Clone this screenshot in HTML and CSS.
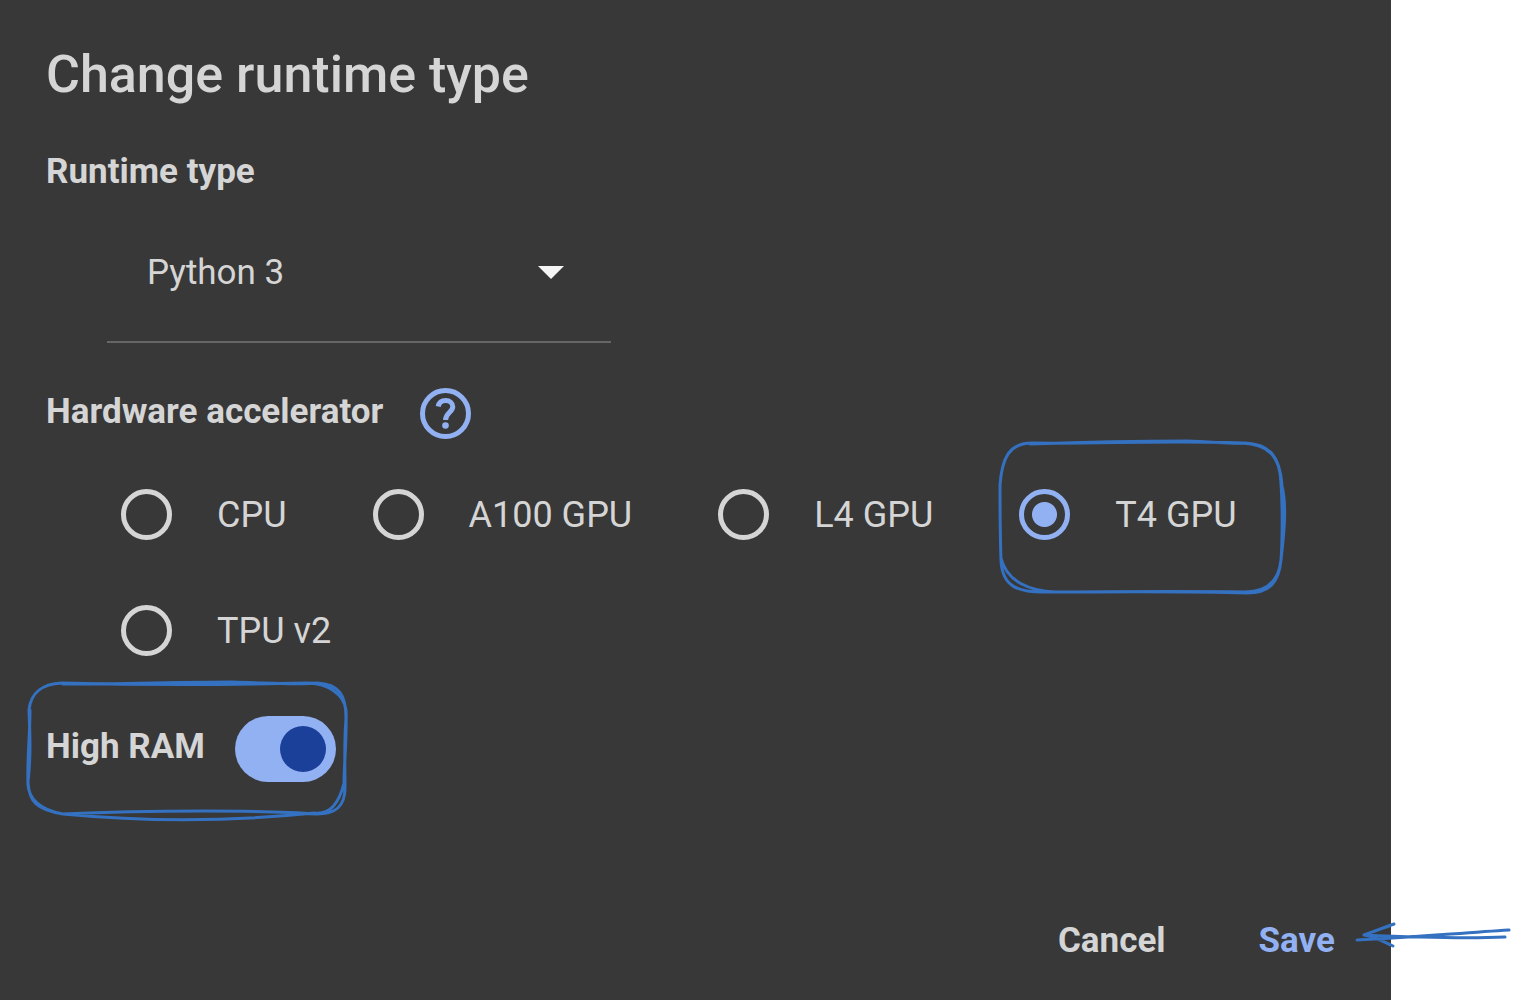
FILE: index.html
```html
<!DOCTYPE html>
<html lang="en">
<head>
<meta charset="utf-8">
<title>Change runtime type</title>
<link rel="stylesheet" href="styles.css">
</head>
<body>
<main class="dialog">
  <h1 class="title">Change runtime type</h1>

  <label class="heading" for="runtime">Runtime type</label>
  <div class="select-field">
    <select class="select" id="runtime">
      <option selected>Python 3</option>
    </select>
    <svg class="select-arrow" viewBox="0 0 26 13" aria-hidden="true"><path d="M0 0H26L13 13Z"/></svg>
  </div>

  <div class="heading-row">
    <h2 class="heading" id="accelerator">Hardware accelerator</h2>
    <button class="help" type="button" aria-label="Help">
      <svg class="help-icon" viewBox="0 0 51 51">
        <circle class="line" cx="25.5" cy="25.5" r="23"/>
        <path class="mark" d="M18.2 18.5C19 14.5 21.8 12.5 25.6 12.5C29.8 12.5 32.8 15.2 32.8 18.8C32.8 24 25.6 25 25.6 32"/>
        <circle class="dot" cx="25.5" cy="37.5" r="3.3"/>
      </svg>
    </button>
  </div>

  <div class="options" role="radiogroup" aria-labelledby="accelerator">
    <label class="option"><input class="radio" type="radio" name="accelerator">CPU</label>
    <label class="option"><input class="radio" type="radio" name="accelerator">A100 GPU</label>
    <label class="option"><input class="radio" type="radio" name="accelerator">L4 GPU</label>
    <label class="option"><input class="radio" type="radio" name="accelerator" checked>T4 GPU
      <svg class="sketch sketch-option" viewBox="0 0 290 160" aria-hidden="true">
        <path d="M33 6C90 4 150 3 190 3C220 4 235 6 248 5C272 6 283 18 284 45C286 75 285 110 284 122C282 145 272 155 250 155C190 153 110 154 50 154C20 155 5 148 4 122C3 95 3 70 3 47C5 20 12 5 35 5C110 6 160 2 245 5C272 6 283 18 285 48C290 68 287 95 284 122C282 142 271 154 248 154C170 153 110 154 58 154C35 153 10 145 4 120"/>
      </svg>
    </label>
    <label class="option"><input class="radio" type="radio" name="accelerator">TPU v2</label>
  </div>

  <div class="ram-row">
    <label class="heading" for="ram">High RAM</label>
    <input class="switch" id="ram" type="checkbox" role="switch" checked>
    <svg class="sketch sketch-ram" viewBox="0 0 324 142" aria-hidden="true">
      <path d="M36 4C100 4 150 2 205 2C245 3 270 5 290 3C312 4 319 15 319 38C317 62 318 85 318 108C318 126 309 134 290 134C240 130 120 130 36 134C10 130 2 122 1 102C4 75 3 55 2 30C4 12 15 4 35 3C110 5 200 5 280 3C300 3 317 14 319 30C320 58 317 85 317 103C312 124 303 135 287 133C210 141 120 142 36 134C12 130 2 118 1 105C0 80 3 55 3 30"/>
    </svg>
  </div>

  <div class="actions">
    <button class="action" type="button">Cancel</button>
    <button class="action action-primary" type="button">Save
      <svg class="sketch sketch-arrow" viewBox="0 0 160 34" aria-hidden="true">
        <path d="M3 20C55 18 105 13 155 10M10 15C55 17 105 19 151 17M10 15C20 11 30 8 40 4M10 15C22 17 30 22 39 26"/>
      </svg>
    </button>
  </div>
</main>
</body>
</html>
```
FILE: styles.css
```css
* { box-sizing: border-box; }

body {
  margin: 0;
  padding-right: 139px;
  background: #fff;
  font-family: Roboto, sans-serif;
  font-size: 36px;
  line-height: 40px;
  color: #d5d5d5;
}

.dialog {
  display: flex;
  flex-direction: column;
  align-items: flex-start;
  padding: 45px 56px 39px 46px;
  background: #383838;
}

.title {
  margin: 0 0 47px;
  font-size: 52px;
  font-weight: 500;
  line-height: 60px;
}

.heading {
  margin: 0;
  font-size: 35px;
  font-weight: 700;
  line-height: 40px;
}

.select-field {
  display: grid;
  align-items: center;
  width: 504px;
  max-width: 100%;
  margin: 9px 0 45px 61px;
}

.select {
  grid-area: 1 / 1;
  width: 100%;
  height: 142px;
  padding: 3px 80px 0 40px;
  appearance: none;
  border: 0;
  border-bottom: 2px solid #666;
  border-radius: 0;
  background: none;
  color: inherit;
  font: inherit;
  font-size: 35px;
}

.select-arrow {
  grid-area: 1 / 1;
  justify-self: end;
  width: 26px;
  height: 13px;
  margin-right: 47px;
  fill: #f5f5f5;
  pointer-events: none;
}

.heading-row,
.ram-row {
  display: flex;
  align-items: center;
}

.heading-row { gap: 37px; }
.heading-row .heading,
.ram-row .heading { padding-bottom: 4px; }

.help {
  padding: 0;
  border: 0;
  background: none;
}

.help-icon {
  display: block;
  width: 51px;
  height: 51px;
}

.line,
.mark {
  fill: none;
  stroke: #92b1f3;
  stroke-width: 5;
}

.dot { fill: #92b1f3; }

.options {
  display: flex;
  flex-wrap: wrap;
  gap: 65px 86px;
  margin: 50px 0 60px 75px;
}

.option {
  position: relative;
  display: flex;
  align-items: center;
  gap: 45px;
}

.radio {
  width: 51px;
  height: 51px;
  margin: 0;
  appearance: none;
  border: 5px solid #d5d5d5;
  border-radius: 50%;
}

.radio:checked {
  border-color: #92b1f3;
  background: radial-gradient(circle, #92b1f3 12px, transparent 13px);
}

.ram-row {
  position: relative;
  gap: 30px;
  margin-bottom: 139px;
}

.switch {
  display: flex;
  align-items: center;
  justify-content: flex-end;
  width: 101px;
  height: 66px;
  margin: 0;
  padding: 10px;
  appearance: none;
  border-radius: 33px;
  background: #92b1f3;
}

.switch::before {
  content: "";
  width: 46px;
  height: 46px;
  border-radius: 50%;
  background: #1b4099;
}

.switch:not(:checked) { justify-content: flex-start; }

.actions {
  display: flex;
  align-self: flex-end;
  gap: 93px;
}

.action {
  position: relative;
  padding: 0;
  border: 0;
  background: none;
  color: inherit;
  font: inherit;
  font-size: 35px;
  font-weight: 700;
  line-height: 40px;
}

.action-primary { color: #92b1f3; }

/* Hand-drawn annotations laid over the controls */
.sketch {
  position: absolute;
  overflow: visible;
  fill: none;
  stroke: #3571c1;
  stroke-width: 3;
  stroke-linecap: round;
  stroke-linejoin: round;
  pointer-events: none;
}

.sketch-option {
  top: -51px;
  left: -22px;
  width: 290px;
  height: 160px;
}

.sketch-ram {
  top: -36px;
  left: -19px;
  width: 324px;
  height: 142px;
}

.sketch-arrow {
  top: -1px;
  left: 95px;
  width: 160px;
  height: 34px;
}
```
